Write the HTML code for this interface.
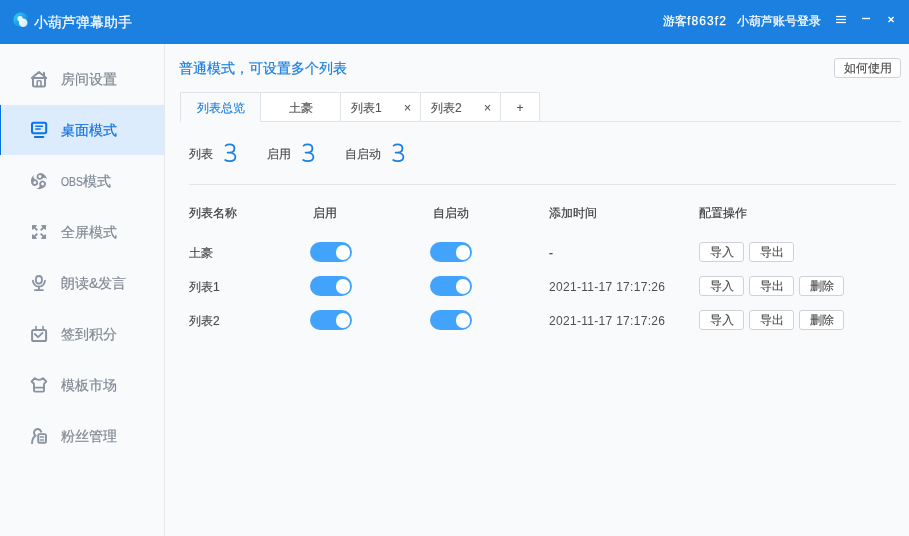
<!DOCTYPE html>
<html><head><meta charset="utf-8">
<style>
*{margin:0;padding:0;box-sizing:border-box}
html,body{width:909px;height:536px;overflow:hidden;background:#f9fafc;font-family:"Liberation Sans",sans-serif;}
#wrap{position:absolute;left:0;top:0;width:909px;height:536px;will-change:transform;-webkit-text-stroke-width:0.2px}
.abs{position:absolute;white-space:nowrap}
#hdr{position:absolute;left:0;top:0;width:909px;height:44px;background:#1b80e0}
#side{position:absolute;left:0;top:44px;width:165px;height:492px;background:#f9fafc;border-right:1px solid #e4e9ec}
.mi{position:absolute;left:0;width:164px;height:50px}
.mi .t{position:absolute;left:61px;top:0;line-height:50px;font-size:14px;color:#818995}
.mi.act{background:#ddecfc}
.mi.act::before{content:"";position:absolute;left:0;top:0;width:1px;height:50px;background:#0a6fe3}
.mi.act::after{content:"";position:absolute;left:1px;top:0;width:1px;height:50px;background:#e9f3fd}
.mi.act .t{color:#1474e0}
.tab{position:absolute;top:92px;height:30px;border:1px solid #e1e4e6;border-left:none;background:#fff;font-size:12px;color:#555;-webkit-text-stroke-width:0.12px;line-height:31px}
.btn{position:absolute;height:20px;border:1px solid #cfd2d6;border-radius:3px;background:#fff;font-size:12px;color:#4a4a4a;-webkit-text-stroke-width:0.12px;text-align:center;line-height:19px}
.tg{position:absolute;width:42px;height:20px;border-radius:10px;background:#42a3fd}
.tg::after{content:"";position:absolute;left:25.5px;top:3px;width:14.5px;height:14.5px;border-radius:50%;background:#fff}
.cell{position:absolute;font-size:12px;color:#3c3c3c;white-space:nowrap;line-height:16px}
.num{position:absolute;font-size:24px;color:#1b80e0;line-height:24px}
.rn{color:#4a4a4a;-webkit-text-stroke-width:0.15px}
.dt{letter-spacing:0.3px;color:#505050;-webkit-text-stroke-width:0}
</style></head><body><div id="wrap">
<div id="hdr">
  <svg class="abs" style="left:0;top:0" width="909" height="44">
    <defs>
      <linearGradient id="lg" x1="0" y1="0" x2="1" y2="1">
        <stop offset="0" stop-color="#30d4f8"/><stop offset="1" stop-color="#0b6fd2"/>
      </linearGradient>
      <linearGradient id="lg2" x1="0" y1="0" x2="1" y2="1">
        <stop offset="0" stop-color="#ffffff"/><stop offset="1" stop-color="#c4e6f4"/>
      </linearGradient>
    </defs>
    <circle cx="20.9" cy="20" r="7.6" fill="url(#lg)"/>
    <circle cx="20.1" cy="18.8" r="2.7" fill="url(#lg2)"/>
    <circle cx="23.2" cy="22.8" r="4.3" fill="url(#lg2)"/>
    <g stroke="#fff" stroke-width="1.2">
      <line x1="836" y1="16.5" x2="846" y2="16.5"/>
      <line x1="836" y1="19.5" x2="846" y2="19.5"/>
      <line x1="836" y1="22.5" x2="846" y2="22.5"/>
      <line x1="862" y1="18.5" x2="870" y2="18.5" stroke-width="1.4"/>
      <line x1="888.5" y1="17.1" x2="893.6" y2="22.1" stroke-width="1.35"/>
      <line x1="893.6" y1="17.1" x2="888.5" y2="22.1" stroke-width="1.35"/>
    </g>
  </svg>
  <div class="abs" style="left:34px;top:12.5px;font-size:14px;color:#fff;line-height:18px;-webkit-text-stroke:0.2px #fff">小葫芦弹幕助手</div>
  <div class="abs" style="left:663px;top:12px;font-size:12px;color:#fff;line-height:18px;-webkit-text-stroke:0.25px #fff">游客<span style="letter-spacing:1.1px">f863f2</span></div>
  <div class="abs" style="left:737px;top:12px;font-size:12px;color:#fff;line-height:18px;-webkit-text-stroke:0.25px #fff">小葫芦账号登录</div>
</div>
<div id="side">
  <div class="mi" style="top:10px"><span class="t">房间设置</span></div>
  <div class="mi act" style="top:61px"><span class="t">桌面模式</span></div>
  <div class="mi" style="top:112px"><span class="t"><span style="display:inline-block;font-size:13px;transform:scaleX(0.8);transform-origin:0 0;margin-right:-5.5px">OBS</span>模式</span></div>
  <div class="mi" style="top:163px"><span class="t">全屏模式</span></div>
  <div class="mi" style="top:214px"><span class="t">朗读&amp;发言</span></div>
  <div class="mi" style="top:265px"><span class="t">签到积分</span></div>
  <div class="mi" style="top:316px"><span class="t">模板市场</span></div>
  <div class="mi" style="top:367px"><span class="t">粉丝管理</span></div>
</div>
<svg class="abs" style="left:0;top:0" width="165" height="536" fill="none" stroke-linecap="round" stroke-linejoin="round">
  <!-- house -->
  <g stroke="#8a93a2" stroke-width="2">
    <path d="M31.8 78 L39 72 L46.2 78 Z"/>
    <path d="M44 72.8 V75.5"/>
    <path d="M33 78 V85 Q33 86.5 34.5 86.5 H43.5 Q45 86.5 45 85 V78"/>
    <path d="M37.2 86.5 V81.5 Q37.2 80.8 38 80.8 H40.2 Q41 80.8 41 81.5 V86.5" stroke-width="1.6"/>
  </g>
  <!-- monitor -->
  <g stroke="#0b72e7" stroke-width="2">
    <rect x="32" y="122.8" width="14.2" height="10.4" rx="1.6"/>
    <path d="M35.8 126.2 H42.5 M35.8 128.9 H40.2" stroke-width="1.5"/>
    <path d="M34.8 137 H43.4" stroke-width="1.9"/>
  </g>
  <!-- obs -->
  <g transform="translate(39.1 181)" fill="#8a93a2" stroke="none">
    <g transform="rotate(-20)">
      <path d="M-8 0 A8 8 0 0 1 -2.47 -7.61 Q-5.2 -5.6 -3.2 -3.1 L-4.6 0 Z"/>
      <circle cx="-4.6" cy="0" r="3.3"/>
      <circle cx="-4.6" cy="0" r="1.5" fill="#f9fafc"/>
    </g>
    <g transform="rotate(100)">
      <path d="M-8 0 A8 8 0 0 1 -2.47 -7.61 Q-5.2 -5.6 -3.2 -3.1 L-4.6 0 Z"/>
      <circle cx="-4.6" cy="0" r="3.3"/>
      <circle cx="-4.6" cy="0" r="1.5" fill="#f9fafc"/>
    </g>
    <g transform="rotate(220)">
      <path d="M-8 0 A8 8 0 0 1 -2.47 -7.61 Q-5.2 -5.6 -3.2 -3.1 L-4.6 0 Z"/>
      <circle cx="-4.6" cy="0" r="3.3"/>
      <circle cx="-4.6" cy="0" r="1.5" fill="#f9fafc"/>
    </g>
  </g>
  <!-- fullscreen -->
  <g stroke="#8a93a2" stroke-width="1.8" fill="#8a93a2">
    <path d="M32.6 225.6 H36.2 L32.6 229.2 Z" stroke-width="1.2"/>
    <path d="M33.5 226.5 L37.3 230.3" stroke-linecap="butt"/>
    <path d="M45.4 225.6 H41.8 L45.4 229.2 Z" stroke-width="1.2"/>
    <path d="M44.5 226.5 L40.7 230.3" stroke-linecap="butt"/>
    <path d="M32.6 238.4 H36.2 L32.6 234.8 Z" stroke-width="1.2"/>
    <path d="M33.5 237.5 L37.3 233.7" stroke-linecap="butt"/>
    <path d="M45.4 238.4 H41.8 L45.4 234.8 Z" stroke-width="1.2"/>
    <path d="M44.5 237.5 L40.7 233.7" stroke-linecap="butt"/>
  </g>
  <!-- mic -->
  <g stroke="#8a93a2" stroke-width="1.8">
    <rect x="35.9" y="276" width="6" height="7.6" rx="3"/>
    <path d="M32.9 280.6 A6 6 0 0 0 45 280.6"/>
    <path d="M38.9 286.6 V289.6"/>
    <path d="M34.9 290.1 H43"/>
  </g>
  <!-- calendar -->
  <g stroke="#8a93a2" stroke-width="2">
    <rect x="32.1" y="330" width="14" height="11" rx="1.6"/>
    <path d="M36 326.6 V329.4 M43 326.6 V329.4" stroke-width="1.6"/>
    <path d="M34.8 334 L38.1 337.2 L42.4 333" stroke-width="1.8"/>
  </g>
  <!-- tshirt -->
  <g stroke="#8a93a2" stroke-width="1.9">
    <path d="M34.8 378.2 Q36.5 379.9 38.9 379.9 Q41.3 379.9 43 378.2 L46.3 381.5 L44 383.8 V390.5 Q44 391.6 43 391.6 H35 Q34 391.6 34 390.5 V383.8 L31.6 381.5 Z"/>
    <path d="M34.3 387.6 H43.7"/>
  </g>
  <!-- fans -->
  <g stroke="#8a93a2" stroke-width="1.9">
    <path d="M41.1 431.8 A3.6 3.6 0 1 0 35.6 435.6 Q32.2 437.8 32 443.2"/>
    <rect x="38.2" y="434.1" width="7.8" height="8.7" rx="1.4"/>
    <path d="M40.3 437.1 H43.6 M40.3 439.9 H43.6" stroke-width="1.5"/>
  </g>
</svg>

<div class="abs" style="left:179px;top:59px;font-size:14px;line-height:18px;color:#1b7fe0;-webkit-text-stroke:0.2px #1b7fe0">普通模式，可设置多个列表</div>
<div class="btn" style="left:834px;top:58px;width:67px">如何使用</div>

<div class="abs" style="left:260px;top:121px;width:641px;height:1px;background:#e1e4e6"></div>
<div class="tab" style="left:180px;width:81px;border-left:1px solid #e1e4e6;border-bottom:none;background:#f9fafc;color:#1b7fe0;text-align:center">列表总览</div>
<div class="tab" style="left:261px;width:80px;text-align:center;padding-left:1px">土豪</div>
<div class="tab" style="left:341px;width:80px;padding-left:10px">列表1<span style="position:absolute;left:63px;font-size:12px">×</span></div>
<div class="tab" style="left:421px;width:80px;padding-left:10px">列表2<span style="position:absolute;left:63px;font-size:12px">×</span></div>
<div class="tab" style="left:501px;width:39px;text-align:center">+</div>

<div class="cell rn" style="left:189px;top:146px">列表</div>
<div class="cell rn" style="left:267px;top:146px">启用</div>
<div class="cell rn" style="left:345px;top:146px">自启动</div>
<svg class="abs" style="left:0;top:0" width="909" height="200" fill="none" stroke="#1b80e0" stroke-width="1.8" stroke-linecap="round">
  <defs><path id="three" d="M225.6 145.6 C226.8 144.7 228.2 144.4 229.6 144.4 C232.6 144.4 234.4 146 234.4 148.4 C234.4 151 232.3 152.6 229.4 152.6 H227.6 M229.4 152.6 C233.2 152.6 235.4 154.6 235.4 157 C235.4 159.6 233 161.2 229.6 161.2 C227.8 161.2 226.4 160.8 225.2 160"/></defs>
  <use href="#three"/><use href="#three" x="78"/><use href="#three" x="168"/>
</svg>
<div class="abs" style="left:189px;top:184px;width:707px;height:1px;background:#e3e6e8"></div>

<div class="cell" style="left:189px;top:205px">列表名称</div>
<div class="cell" style="left:313px;top:205px">启用</div>
<div class="cell" style="left:433px;top:205px">自启动</div>
<div class="cell" style="left:549px;top:205px">添加时间</div>
<div class="cell" style="left:699px;top:205px">配置操作</div>

<div class="cell rn" style="left:189px;top:245px">土豪</div>
<div class="tg" style="left:310px;top:242px"></div>
<div class="tg" style="left:430px;top:242px"></div>
<div class="cell rn" style="left:549px;top:245px">-</div>
<div class="btn" style="left:699px;top:242px;width:45px">导入</div>
<div class="btn" style="left:749px;top:242px;width:45px">导出</div>

<div class="cell rn" style="left:189px;top:279px">列表1</div>
<div class="tg" style="left:310px;top:276px"></div>
<div class="tg" style="left:430px;top:276px"></div>
<div class="cell dt" style="left:549px;top:279px">2021-11-17 17:17:26</div>
<div class="btn" style="left:699px;top:276px;width:45px">导入</div>
<div class="btn" style="left:749px;top:276px;width:45px">导出</div>
<div class="btn" style="left:799px;top:276px;width:45px">删除</div>

<div class="cell rn" style="left:189px;top:313px">列表2</div>
<div class="tg" style="left:310px;top:310px"></div>
<div class="tg" style="left:430px;top:310px"></div>
<div class="cell dt" style="left:549px;top:313px">2021-11-17 17:17:26</div>
<div class="btn" style="left:699px;top:310px;width:45px">导入</div>
<div class="btn" style="left:749px;top:310px;width:45px">导出</div>
<div class="btn" style="left:799px;top:310px;width:45px">删除</div>
</div></body></html>
